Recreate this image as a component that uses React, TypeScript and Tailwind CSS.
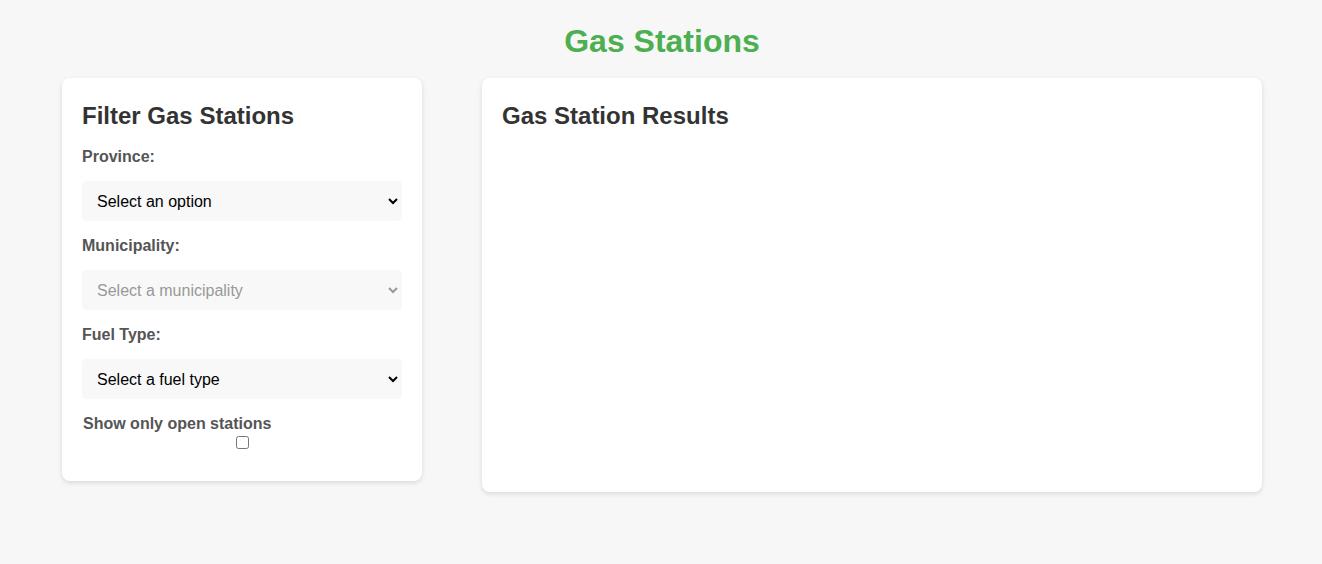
import React from "react";

const font = { fontFamily: '"Liberation Sans", Arial, sans-serif' };

export default function App() {
  return (
    <div className="min-h-[564px] bg-[#f7f7f7] pt-[23px] pl-[2px] text-[#333]" style={font}>
      <h1 className="text-center text-[32px] leading-[37px] font-bold text-[#4caf50] mb-[18px]">Gas Stations</h1>
      <div className="mx-auto flex w-[1200px] items-start gap-[60px]">
        <div className="w-[360px] shrink-0 rounded-[8px] bg-white px-[20px] pt-[21px] pb-[32px] shadow-[0_2px_5px_rgba(0,0,0,0.12)]">
          <h2 className="text-[24px] leading-[34px] font-bold text-[#333] mb-[14px]">Filter Gas Stations</h2>
          <label className="block text-[16px] leading-[19px] font-bold text-[#555] mb-[15px]">Province:</label>
          <select className="block w-full h-[40px] mb-[15px] rounded-[4px] border border-[#f8f8f8] bg-[#f8f8f8] px-[10px] text-[16px] text-black outline-none" style={font} defaultValue="">
            <option value="">Select an option</option>
          </select>
          <label className="block text-[16px] leading-[19px] font-bold text-[#555] mb-[15px]">Municipality:</label>
          <select disabled className="block w-full h-[40px] mb-[15px] rounded-[4px] border border-[#f8f8f8] bg-[#f8f8f8] px-[10px] text-[16px] text-[#999] outline-none" style={font} defaultValue="">
            <option value="">Select a municipality</option>
          </select>
          <label className="block text-[16px] leading-[19px] font-bold text-[#555] mb-[15px]">Fuel Type:</label>
          <select className="block w-full h-[40px] mb-[15px] rounded-[4px] border border-[#f8f8f8] bg-[#f8f8f8] px-[10px] text-[16px] text-black outline-none" style={font} defaultValue="">
            <option value="">Select a fuel type</option>
          </select>
          <label className="block text-[16px] leading-[19px] font-bold text-[#555] pl-[1px]">
            Show only open stations
            <input type="checkbox" className="mx-auto mt-[3px] block h-[13px] w-[13px]" />
          </label>
        </div>
        <div className="h-[414px] flex-1 rounded-[8px] bg-white px-[20px] pt-[21px] shadow-[0_2px_5px_rgba(0,0,0,0.12)]">
          <h2 className="text-[24px] leading-[34px] font-bold text-[#333]">Gas Station Results</h2>
        </div>
      </div>
    </div>
  );
}
